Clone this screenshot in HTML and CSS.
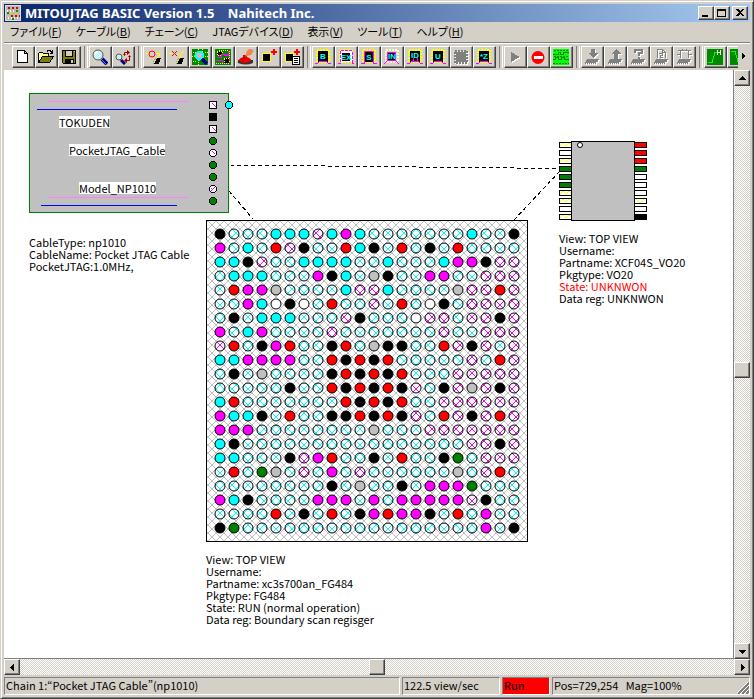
FILE: index.html
```html
<!DOCTYPE html>
<html lang="ja">
<head>
<meta charset="utf-8">
<title>MITOUJTAG BASIC</title>
<link rel="stylesheet" href="styles.css">
</head>
<body>
<svg class="defs" aria-hidden="true">
  <symbol id="chip" viewBox="0 0 16 16">
    <rect x="2" y="1" width="12" height="12" fill="none" stroke="#ff0" stroke-width="2" stroke-dasharray="2 1"/>
    <rect x="3" y="2" width="10" height="11" fill="#000"/>
  </symbol>
  <symbol id="legs" viewBox="0 0 16 16">
    <path d="M0 14.500H3M3 13.500H4M4 12.500H12M12 13.500H13M13 14.500H16" fill="none" stroke="#f0f" stroke-width="1"/>
  </symbol>
  <symbol id="bug" viewBox="0 0 16 16">
    <path d="M3 10H15L12 14H1Z" fill="#808080"/>
    <path d="M1.500 13V15M3.500 13V15M5.500 13V15M7.500 13V15M9.500 13V15M11.500 13V15M13.500 11V13" stroke="#808080"/>
  </symbol>
</svg>
<div class="window">
  <header class="title">
    <svg class="app" viewBox="0 0 16 16"><path fill="#b8b8b8" stroke="#ddd" d="M.5.5h15v15H.5z"/><path stroke="#d00" stroke-width="2" stroke-dasharray="2 2" d="M3 3h11M6 11h9"/><path stroke="#fff" stroke-width="2" stroke-dasharray="1 2" d="M2 6h12M3 13h11"/><path stroke="#e8d020" stroke-width="2" stroke-dasharray="2 3" d="M5 8h9M2 11h4"/><path stroke="#090" stroke-width="2" d="M2 8h2M11 6h2M7 14h2"/></svg>
    <h1>MITOUJTAG BASIC Version 1.5 &nbsp;&nbsp; Nahitech Inc.</h1>
    <div class="sys">
      <button aria-label="Minimize"><svg viewBox="0 0 12 10"><path stroke="#000" stroke-width="2" d="M2 8h6"/></svg></button>
      <button aria-label="Maximize"><svg viewBox="0 0 12 10"><path d="M1.500 1.500h8v7h-8zM1 1.500h9M1 2.500h9" fill="none" stroke="#000"/></svg></button>
      <button class="close" aria-label="Close"><svg viewBox="0 0 12 10"><path d="M2 1h2l2 2 2-2h2L7 4.500 10 8H8L6 6 4 8H2L5 4.500z"/></svg></button>
    </div>
  </header>
  <nav class="menu">
    <button>ファイル(<u>F</u>)</button><button>ケーブル(<u>B</u>)</button><button>チェーン(<u>C</u>)</button><button>JTAGデバイス(<u>D</u>)</button><button>表示(<u>V</u>)</button><button>ツール(<u>T</u>)</button><button>ヘルプ(<u>H</u>)</button>
  </nav>
  <div class="toolbar">
    <div class="tools">
      <div class="group">
        <button aria-label="New"><svg viewBox="0 0 16 16"><path fill="#fff" stroke="#000" d="M2.500 1.500h7l3 3v9h-10zM9.500 1.500v3h3"/></svg></button>
        <button aria-label="Open"><svg viewBox="0 0 16 16"><path fill="#ff9" stroke="#000" d="M.5 13.500v-9l1-1h3l1 1h5v3"/><path fill="#808000" stroke="#000" d="M.5 13.500l4-6h11l-4 6z"/><path fill="none" stroke="#000" d="M9 2.500l1-1h2l2 2M14.500 1v3.500H12"/></svg></button>
        <button aria-label="Save"><svg viewBox="0 0 16 16"><path fill="#808000" stroke="#000" d="M1.500 1.500h13v13h-12l-1-1z"/><path fill="#d4d0c8" stroke="#000" d="M4.500 1.500h7v6h-7z"/><path d="M4 10h9v4H4z"/><path fill="#d4d0c8" d="M10 11h2v3h-2zM13 2h1v1h-1z"/></svg></button>
      </div>
      <div class="group">
        <button aria-label="Zoom"><svg class="smooth" viewBox="0 0 16 16"><path stroke="#000080" stroke-width="4" d="M10 10l5 5"/><path stroke="#6080ff" d="M10 11l4 4"/><circle cx="6" cy="6" r="5" fill="#c8f4f8" stroke="#555"/><path d="M3 6q0-3 3-3" fill="none" stroke="#fff" stroke-width="2"/></svg></button>
        <button aria-label="Zoom reset"><svg class="smooth" viewBox="0 0 16 16"><path stroke="#000080" stroke-width="3" d="M6 11l4 4"/><circle cx="4" cy="8" r="3" fill="#c8f4f8" stroke="#555"/><path d="M9.500 6V3.500h3M14.500 7v4.500h-3" fill="none" stroke="#900"/><path d="M12 1l3 2.500L12 6zM12 9l-3 2.500 3 2.500zM8 5h3L9.500 7zM13 8h3l-1.500-2z" fill="#900"/></svg></button>
      </div>
      <div class="group">
        <button aria-label="Connect"><svg viewBox="0 0 16 16"><path d="M0 4.500h3M9 4.500h4v2l-2 3" fill="none" stroke="#ff0"/><circle class="smooth" cx="6" cy="5" r="3" fill="none" stroke="#f00"/><path d="M11 9h4l-2 6H8z"/><path d="M7.500 15v-3l2-3" fill="none" stroke="#c8a000" stroke-dasharray="1 1"/></svg></button>
        <button aria-label="Disconnect"><svg viewBox="0 0 16 16"><path d="M0 4.500h3M8 5.500h2M14.500 2l-3 4v3" fill="none" stroke="#ff0"/><path d="M3 2l5 5M8 2L3 7" stroke="#f00"/><path d="M11 9h4l-2 6H8z"/><path d="M7.500 15v-3l2-3" fill="none" stroke="#c8a000" stroke-dasharray="1 1"/></svg></button>
        <button aria-label="Scan"><svg viewBox="0 0 16 16"><path fill="#080" d="M0 0h16v16H0z"/><path d="M1 3h3M6 0v3M10 0v3M13 3h3M0 7h3M1 12h3M6 11v5M13 7h3" stroke="#ff0" stroke-dasharray="1 1"/><circle cx="7.500" cy="6.500" r="4" fill="#c0c0c0" stroke="#0ff" stroke-width="2"/><path d="M10 10l5 5" stroke="#008" stroke-width="3"/></svg></button>
        <button aria-label="Trace"><svg viewBox="0 0 16 16"><path fill="#080" d="M0 0h16v16H0z"/><path d="M2 2h5v4H2zM9 9h5v5H9z" stroke="#ff0" stroke-dasharray="1 1"/><path d="M2 8.500h4v-3h7v-4M1 11.500h6v3M9 6.500h5v5" fill="none" stroke="#f0f"/><path d="M4 1.500h9M1 14.500h7M14.500 2v7" stroke="#ff0" stroke-dasharray="1 1"/></svg></button>
        <button aria-label="Reset"><svg class="smooth" viewBox="0 0 16 16"><path d="M0 11h15v3q-7 3-15 0z" fill="#333"/><ellipse cx="7" cy="11" rx="6" ry="3" fill="#e00"/><path d="M5 6h4v5H5z" fill="#c00"/><path d="M9 2l2-2h4v3l-2 3-4 1-2 1z" fill="#ff8040"/><path d="M13 0h3v3z" fill="#8cf"/></svg></button>
        <button aria-label="Add device"><svg viewBox="0 0 16 16"><path d="M1 4h9v9H1z" fill="#ff0"/><path d="M2 5h7v7H2z"/><path d="M13 0v6M10 3h6" stroke="#f00" stroke-width="2"/></svg></button>
        <button aria-label="Add from list"><svg viewBox="0 0 16 16"><path d="M1 4h9v9H1z" fill="#ff0"/><path d="M2 5h7v7H2z"/><path d="M13 0v6M10 3h6" stroke="#f00" stroke-width="2"/><path fill="#fff" stroke="#000" d="M8.500 7.500h7v8h-7z"/><path stroke="#000" d="M10 9.500h4M10 11.500h4M10 13.500h4"/></svg></button>
      </div>
      <div class="group">
        <button aria-label="BYPASS"><svg viewBox="0 0 16 16"><use href="#chip"/><text x="8" y="10">B</text><use href="#legs"/></svg></button>
        <button aria-label="EXTEST"><svg viewBox="0 0 16 16"><rect x="2" y="1" width="12" height="12" fill="none" stroke="#ff0" stroke-width="2" stroke-dasharray="2 1"/><path fill="#fff" d="M2 2h12v11H2z"/><path d="M4 4h8v8H4z"/><path d="M0 14.500h2v-13h12v13h2" fill="none" stroke="#f0f" stroke-dasharray="3 1"/><text x="8" y="11">EX</text></svg></button>
        <button aria-label="SAMPLE"><svg viewBox="0 0 16 16"><use href="#chip"/><path d="M0 14.500h3.500v-12h9v12H16" fill="none" stroke="#f0f"/><text x="8" y="11">S</text></svg></button>
        <button aria-label="INTEST"><svg viewBox="0 0 16 16"><rect x="2" y="1" width="12" height="12" fill="none" stroke="#ffc" stroke-width="2" stroke-dasharray="2 1"/><path d="M3.500 3.500h8v8h-8zM0 15l4-4M15 15l-4-4" fill="none" stroke="#f0f"/><path d="M4 4h7v7H4z"/><text x="8" y="10">IN</text></svg></button>
        <button aria-label="IDCODE"><svg viewBox="0 0 16 16"><use href="#chip"/><text x="8" y="9">ID</text><use href="#legs"/><path d="M6.500 9v4M10.500 9v4" stroke="#f0f"/></svg></button>
        <button aria-label="USERCODE"><svg viewBox="0 0 16 16"><use href="#chip"/><text x="8" y="10">U</text><use href="#legs"/></svg></button>
        <button disabled aria-label="CLAMP"><svg viewBox="0 0 16 16"><path fill="#808080" d="M3 3h10v10H3z"/><path fill="none" stroke="#808080" stroke-width="2" stroke-dasharray="2 1" d="M2 2h12v12H2z"/></svg></button>
        <button aria-label="HIGHZ"><svg viewBox="0 0 16 16"><use href="#chip"/><text x="8" y="10">*Z</text><use href="#legs"/></svg></button>
      </div>
      <div class="group">
        <button disabled aria-label="Run"><svg viewBox="0 0 16 16"><path fill="#808080" d="M4 3l9 5-9 5z"/></svg></button>
        <button aria-label="Stop"><svg class="smooth" viewBox="0 0 16 16"><circle cx="8" cy="8.500" r="6.500" fill="#f00"/><path d="M4 7h9v3H4z" fill="#fff"/></svg></button>
        <button aria-label="Waveform"><svg viewBox="0 0 16 16"><path fill="#0f0" d="M0 0h16v16H0z"/><path stroke="#008000" fill="none" d="M0 5.500h5v-2h2v2h3v-2h6M0 10.500h2v-2h3v2h3v-2h3v2h5"/><path stroke="#008000" stroke-dasharray="2 1" d="M1 1.500h14M0 14.500h16M1 7.500h14"/></svg></button>
      </div>
      <div class="group">
        <button disabled aria-label="Write"><svg viewBox="0 0 16 16"><path fill="#808080" d="M7 0h4v4h3L9 9 4 4h3z"/><use href="#bug"/></svg></button>
        <button disabled aria-label="Read"><svg viewBox="0 0 16 16"><path fill="#808080" d="M7 10h4V5h3L9 0 4 5h3z"/><use href="#bug"/></svg></button>
        <button disabled aria-label="Verify"><svg viewBox="0 0 16 16"><path fill="none" stroke="#808080" stroke-width="2" d="M5 4V1h7v3H9v3M8 9h2"/><use href="#bug"/></svg></button>
        <button disabled aria-label="Blank check"><svg viewBox="0 0 16 16"><path fill="none" stroke="#808080" d="M4.500 9V.5h5l3 3V9M9.500.5v3h3M6 4.500h3v2H7v2h3"/><use href="#bug"/></svg></button>
        <button disabled aria-label="Erase"><svg viewBox="0 0 16 16"><path fill="none" stroke="#808080" d="M4.500 9V1.500h8V9M2 1.500h2M1 5.500h3M13 1.500h2M13 5.500h3M6.500 0v1M10.500 0v1"/><use href="#bug"/></svg></button>
      </div>
      <div class="group">
        <button aria-label="High"><svg viewBox="0 0 16 16"><path fill="#080" d="M0 0h16v16H0z"/><path fill="none" stroke="#0f0" d="M1 13.500h4l3-10h3"/><path fill="none" stroke="#fff" d="M10.500 1v5M13.500 1v5M10 3.500h3"/></svg></button>
        <button aria-label="Low"><svg viewBox="0 0 16 16"><path fill="#080" d="M0 0h16v16H0z"/><path fill="none" stroke="#0f0" d="M1 2.500h4l3 10h6"/></svg></button>
      </div>
    </div>
    <button class="more" aria-label="More tools"><svg viewBox="0 0 4 6"><path d="M0 0l3 3-3 3z"/></svg></button>
  </div>
  <main class="view">
    <div class="canvas">
      <svg class="wires"><path d="M226 95L556 98.500M225 121L249 149M510 150L555 102"/></svg>

      <section class="node cable">
        <svg viewBox="0 0 204 120">
          <rect x=".5" y=".5" width="199" height="119" fill="silver" stroke="green"/>
          <path stroke="#ff80ff" d="M20 8.500h140M20 104.500h140"/>
          <path stroke="#00f" d="M8 16.500h140M12 112.500h136"/>
          <g stroke="#000">
            <rect x="180.500" y="8.500" width="7" height="7" fill="#fff"/><rect x="180.500" y="20.500" width="7" height="7"/><rect x="180.500" y="32.500" width="7" height="7" fill="#fff"/>
            <circle cx="184" cy="48" r="3.500" fill="green"/><circle cx="184" cy="60" r="3.500" fill="#fff"/><circle cx="184" cy="72" r="3.500" fill="green"/><circle cx="184" cy="84" r="3.500" fill="green"/><circle cx="184" cy="96" r="3.500" fill="#fff"/><circle cx="184" cy="108" r="3.500" fill="green"/>
            <circle cx="200" cy="12" r="3.500" fill="#0ff"/>
          </g>
          <path stroke="#f0f" d="M183 10l4 4M183 34l4 4M183 58l3 3M182 98l4-4M182 95l2 2"/>
        </svg>
        <span class="tag vendor">TOKUDEN</span>
        <span class="tag product">PocketJTAG_Cable</span>
        <span class="tag model">Model_NP1010</span>
      </section>
      <div class="node info cable-info">CableType: np1010<br>CableName: Pocket JTAG Cable<br>PocketJTAG:1.0MHz,</div>

      <svg class="node fpga" id="fpga" viewBox="0 0 322 322">
        <defs>
          <path id="cross" d="M0 .5h1M7 .5h1M1 1.500h1M6 1.500h1M2 2.500h1M5 2.500h1M3 3.500h2M3 4.500h2M2 5.500h1M5 5.500h1M1 6.500h1M6 6.500h1M0 7.500h1M7 7.500h1"/>
          <pattern id="hatch-s" patternUnits="userSpaceOnUse" x="2" y="1" width="8" height="8"><use href="#cross" stroke="silver"/></pattern>
          <pattern id="hatch-c" patternUnits="userSpaceOnUse" x="2" y="1" width="8" height="8"><path fill="#fff" d="M0 0h8v8H0z"/><use href="#cross" stroke="#0ff"/></pattern>
          <pattern id="hatch-m" patternUnits="userSpaceOnUse" x="2" y="1" width="8" height="8"><path fill="#fff" d="M0 0h8v8H0z"/><use href="#cross" stroke="#f0f"/></pattern>
        </defs>
        <rect x=".5" y=".5" width="321" height="321" fill="url(#hatch-s)" stroke="#000"/>
      </svg>
      <div class="node info fpga-info">View: TOP VIEW<br>Username:<br>Partname: xc3s700an_FG484<br>Pkgtype: FG484<br>State: RUN (normal operation)<br>Data reg: Boundary scan regisger</div>

      <svg class="node rom" viewBox="0 0 88 80">
        <g stroke="#000" fill="#fff">
          <path d="M.5 1.500h12v5H.5zM.5 9.500h12v5H.5zM.5 17.500h12v5H.5zM.5 49.500h12v5H.5zM.5 57.500h12v5H.5zM.5 65.500h12v5H.5zM.5 73.500h12v5H.5zM75.500 33.500h12v5h-12zM75.500 41.500h12v5h-12zM75.500 49.500h12v5h-12zM75.500 57.500h12v5h-12zM75.500 65.500h12v5h-12z"/>
          <path fill="green" d="M.5 25.500h12v5H.5zM.5 33.500h12v5H.5zM.5 41.500h12v5H.5zM75.500 25.500h12v5h-12z"/>
          <path fill="red" d="M75.500 1.500h12v5h-12zM75.500 9.500h12v5h-12zM75.500 17.500h12v5h-12z"/>
          <path fill="#000" d="M75.500 73.500h12v5h-12z"/>
          <path fill="silver" d="M12.500.5h63v79h-63z"/>
          <circle class="smooth" cx="21" cy="4" r="2.500"/>
        </g>
        <path fill="none" stroke="#ff0" d="M1 5l3-3 3 3 3-3 2 2M1 21l3-3 3 3 3-3 2 2M1 53l3-3 3 3 3-3 2 2M1 61l3-3 3 3 3-3 2 2M1 77l3-3 3 3 3-3 2 2M77 58l4 4 4-4"/>
      </svg>
      <div class="node info rom-info">View: TOP VIEW<br>Username:<br>Partname: XCF04S_VO20<br>Pkgtype: VO20<br><span class="unknown">State: UNKNWON</span><br>Data reg: UNKNWON</div>
    </div>
    <div class="bar vertical">
      <button aria-label="Scroll up"><svg viewBox="0 0 7 7"><path d="M0 5h7L3.500 1z"/></svg></button>
      <div class="track above"></div><div class="thumb"></div><div class="track below"></div>
      <button aria-label="Scroll down"><svg viewBox="0 0 7 7"><path d="M0 2h7L3.500 6z"/></svg></button>
    </div>
  </main>
  <div class="bar horizontal">
    <button aria-label="Scroll left"><svg viewBox="0 0 7 7"><path d="M5 0v7L1 3.500z"/></svg></button>
    <div class="track"></div><div class="thumb"></div><div class="track"></div>
    <button aria-label="Scroll right"><svg viewBox="0 0 7 7"><path d="M2 0v7l4-3.500z"/></svg></button>
  </div>
  <footer class="status">
    <div class="pane chain">Chain 1:“Pocket JTAG Cable”(np1010)</div>
    <div class="pane rate">122.5 view/sec</div>
    <div class="pane run">Run</div>
    <div class="pane pos">Pos=729,254 &nbsp; Mag=100%<svg class="grip" viewBox="0 0 12 12"><path stroke="#808080" stroke-width="2" d="M1 12L12 1M5 12l7-7M9 12l3-3"/><path stroke="#fff" d="M0 11L11 0M3 12l9-9M7 12l5-5"/></svg></div>
  </footer>
</div>
<script src="balls.js"></script>
</body>
</html>
```
FILE: balls.js
```js
// One letter per ball: solid states, plus c and m for the hatched ones.
const rows = [
  'KcccCCCmCMCcccccccCccK',
  'McCcRmKccRCKcRcKcRcccc',
  'CCKmccCCCCccCcccCMMKmm',
  'cCCCcccMKCcgKccMMccmmm',
  'cRMMgccccCmmCccccgmmRm',
  'ccMCWKWcRccmcRcWKcmmmm',
  'cKcCCCcccmKcccWmmcmmKm',
  'McCMccccmcccccccmccmmm',
  'mRcKMRccKRcgKKccRmKmcm',
  'CCMMMMccRKRKRcccccmcRm',
  'cKcgccccKRKRKRcccmmmmm',
  'cccccKccRKRKRKmcKmgmKm',
  'CRcccccccRKRKRccmmmmmm',
  'MCCKcRccKKRKRKmcRmKmRm',
  'MMMccccccccgcccmmmmmmm',
  'CKccccccccccccccccmmKm',
  'CCcccKmMRccKcRccKGcmmm',
  'cRcGgcmcMcmccccccgcmRc',
  'ccccccccKcgccKcMMMGccc',
  'MCKccccMMMcMcMMMMMmKcc',
  'ccccRcKcRcKMRMMKcRcMcc',
  'KGcccccccccccccccccMcK'
];
const fills = {
  K: '#000', C: '#0ff', M: '#f0f', R: '#f00', G: 'green', g: 'silver', W: '#fff',
  c: 'url(#hatch-c)', m: 'url(#hatch-m)'
};
const pitch = 14;
const fpga = document.getElementById('fpga');
rows.forEach((row, y) => [...row].forEach((state, x) => {
  const ball = document.createElementNS('http://www.w3.org/2000/svg', 'circle');
  ball.setAttribute('class', 'smooth');
  ball.setAttribute('cx', pitch * (x + 1));
  ball.setAttribute('cy', pitch * (y + 1));
  ball.setAttribute('r', 5);
  ball.setAttribute('fill', fills[state]);
  ball.setAttribute('stroke', '#000');
  fpga.append(ball);
}));
```
FILE: styles.css
```css
* { box-sizing: border-box; }
body {
  margin: 0;
  background: #d4d0c8;
  color: #000;
  font: 11px/12px "Noto Sans CJK JP", sans-serif;
}
button {
  margin: 0;
  padding: 0;
  border: 0;
  background: #d4d0c8;
  color: inherit;
  font: inherit;
}
svg { display: block; shape-rendering: crispEdges; }
.smooth, .smooth * { shape-rendering: auto; }
.defs { position: absolute; width: 0; height: 0; }

.window {
  display: flex;
  flex-direction: column;
  min-height: 100vh;
  padding: 3px;
  border: 1px solid #404040;
  border-top-color: #d4d0c8;
  border-left-color: #d4d0c8;
  box-shadow: inset 1px 1px #fff, inset -1px -1px #808080;
}

.title {
  display: flex;
  align-items: center;
  height: 18px;
  padding: 0 2px 0 1px;
  background: linear-gradient(90deg, #0a246a, #a6caf0);
  color: #fff;
}
.app { width: 16px; height: 16px; }
.title h1 { flex: 1; margin: 0 0 0 4px; font: bold 13px/18px "Noto Sans", sans-serif; white-space: nowrap; }
.sys { display: flex; }
.sys button { width: 16px; height: 14px; padding: 0 1px; }
.sys svg { width: 12px; height: 10px; }
.sys .close { margin-left: 2px; }

.sys button, .group button, .bar button, .thumb {
  border: 1px solid;
  border-color: #fff #404040 #404040 #fff;
  box-shadow: inset -1px -1px #808080;
  background: #d4d0c8;
}

.menu {
  display: flex;
  gap: 14px;
  height: 20px;
  padding: 0 6px;
  font-feature-settings: "palt";
  line-height: 18px;
  white-space: nowrap;
}
.menu button { height: 18px; }

.toolbar {
  display: flex;
  align-items: flex-start;
  height: 28px;
  padding-top: 3px;
  border-top: 1px solid #808080;
  box-shadow: inset 0 1px #fff;
}
.tools { display: flex; flex: 1; gap: 8px; min-width: 0; padding-left: 8px; overflow: hidden; }
.group { display: flex; flex: none; }
.group + .group { position: relative; }
.group + .group::before {
  content: "";
  position: absolute;
  left: -5px;
  width: 2px;
  height: 22px;
  border-left: 1px solid #808080;
  border-right: 1px solid #fff;
}
.group button { display: grid; place-content: start; width: 23px; height: 22px; padding: 2px; }
.group svg { width: 16px; height: 16px; }
.group button:disabled svg { filter: drop-shadow(1px 1px 0 #fff); }
.group text { fill: #0ff; font: bold 8px "Liberation Sans", sans-serif; text-anchor: middle; }
.more { display: grid; place-items: center; width: 12px; height: 20px; }
.more svg { width: 4px; height: 6px; }

.view { display: flex; flex: 1; }
.canvas { position: relative; flex: 1; min-height: 588px; overflow: hidden; background: #fff; border-bottom: 1px solid #808080; }
.wires { width: 100%; height: 100%; position: absolute; }
.wires path { fill: none; stroke: #000; stroke-dasharray: 4 3; }
.node { position: absolute; }
.info { white-space: nowrap; }
.unknown { color: #f00; }
.cable { left: 25px; top: 23px; width: 204px; height: 120px; }
.cable svg { width: 204px; height: 120px; }
.tag { position: absolute; background: #fff; white-space: nowrap; }
.vendor { left: 30px; top: 23px; }
.product { left: 40px; top: 51px; }
.model { left: 50px; top: 89px; }
.cable-info { left: 25px; top: 166px; }
.fpga { left: 202px; top: 150px; width: 322px; height: 322px; }
.fpga-info { left: 202px; top: 483px; }
.rom { left: 555px; top: 71px; width: 88px; height: 80px; }
.rom-info { left: 555px; top: 162px; }

.bar { display: flex; }
.bar button, .thumb { display: grid; flex: none; place-items: center; width: 16px; height: 16px; }
.bar svg { width: 7px; height: 7px; }
.track { flex: 1; background: repeating-conic-gradient(#fff 0 25%, #d4d0c8 0 50%) 0 0 / 2px 2px; }
.above { flex: 51; }
.below { flex: 49; }
.vertical { flex-direction: column; width: 17px; border-left: 1px solid #808080; }

.status { display: flex; gap: 2px; padding-top: 2px; }
.pane {
  height: 18px;
  padding-left: 1px;
  border: 1px solid;
  border-color: #808080 #fff #fff #808080;
  line-height: 15px;
  white-space: nowrap;
}
.chain { flex: 1; }
.rate { width: 98px; }
.run { width: 48px; background: #f00; }
.pos { display: flex; justify-content: space-between; width: 198px; }
.grip { align-self: flex-end; width: 12px; height: 12px; }
```
